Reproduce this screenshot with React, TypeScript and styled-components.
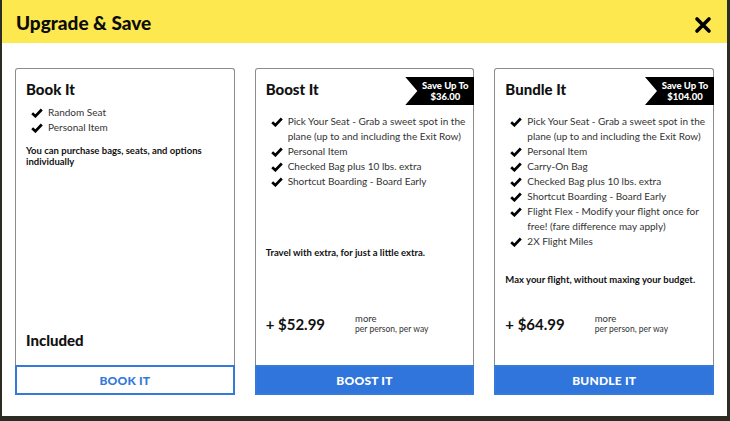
import React from 'react';
import styled, { createGlobalStyle } from 'styled-components';

interface Plan {
  title: string;
  features: string[];
  description: string;
  descGap: number;
  save?: string;
  price?: string;
  button: string;
  primary: boolean;
}

const PLANS: Plan[] = [
  {
    title: 'Book It',
    features: ['Random Seat', 'Personal Item'],
    description: 'You can purchase bags, seats, and options individually',
    descGap: 10,
    button: 'BOOK IT',
    primary: false,
  },
  {
    title: 'Boost It',
    features: [
      'Pick Your Seat - Grab a sweet spot in the plane (up to and including the Exit Row)',
      'Personal Item',
      'Checked Bag plus 10 lbs. extra',
      'Shortcut Boarding - Board Early',
    ],
    description: 'Travel with extra, for just a little extra.',
    descGap: 58,
    save: '$36.00',
    price: '+ $52.99',
    button: 'BOOST IT',
    primary: true,
  },
  {
    title: 'Bundle It',
    features: [
      'Pick Your Seat - Grab a sweet spot in the plane (up to and including the Exit Row)',
      'Personal Item',
      'Carry-On Bag',
      'Checked Bag plus 10 lbs. extra',
      'Shortcut Boarding - Board Early',
      'Flight Flex - Modify your flight once for free! (fare difference may apply)',
      '2X Flight Miles',
    ],
    description: 'Max your flight, without maxing your budget.',
    descGap: 25,
    save: '$104.00',
    price: '+ $64.99',
    button: 'BUNDLE IT',
    primary: true,
  },
];

const GlobalStyle = createGlobalStyle`
  html, body {
    margin: 0;
    padding: 0;
    background: #2c2c24;
    font-family: Lato, 'Liberation Sans', sans-serif;
  }
`;

const Check = () => (
  <CheckIcon viewBox="0 0 12 10" aria-hidden>
    <path d="M1.2 5.2 L4.4 8.2 L10.8 1.5" />
  </CheckIcon>
);

const App = () => (
  <>
    <GlobalStyle />
    <Modal>
      <Header>
        <Title>Upgrade &amp; Save</Title>
        <Close aria-label="Close">
          <svg viewBox="0 0 18 18" width="18" height="18">
            <path d="M3 3 L15 15 M15 3 L3 15" />
          </svg>
        </Close>
      </Header>
      <Cards>
        {PLANS.map((plan) => (
          <Card key={plan.title}>
            <CardBody>
              <CardHead>
                <CardTitle>{plan.title}</CardTitle>
                {plan.save && (
                  <Ribbon>
                    Save Up To
                    <br />
                    {plan.save}
                  </Ribbon>
                )}
              </CardHead>
              <FeatureList>
                {plan.features.map((f) => (
                  <li key={f}>
                    <Check />
                    <span>{f}</span>
                  </li>
                ))}
              </FeatureList>
              <Desc $gap={plan.descGap}>{plan.description}</Desc>
              {plan.price ? (
                <PriceRow>
                  <Price>{plan.price}</Price>
                  <PriceNote>
                    <span>more</span>
                    <small>per person, per way</small>
                  </PriceNote>
                </PriceRow>
              ) : (
                <Included>Included</Included>
              )}
            </CardBody>
            <ActionButton $primary={plan.primary}>{plan.button}</ActionButton>
          </Card>
        ))}
      </Cards>
    </Modal>
  </>
);

const Modal = styled.div`
  margin-left: 2px;
  width: 725px;
  height: 416px;
  background: #fff;
  display: flex;
  flex-direction: column;
`;

const Header = styled.header`
  height: 43px;
  background: #fde84f;
  display: flex;
  align-items: center;
  justify-content: space-between;
  padding: 0 14px;
  box-sizing: border-box;
`;

const Title = styled.h2`
  margin: 0;
  font-size: 19px;
  font-weight: 900;
  color: #0c0c0c;
  padding-top: 1px;
`;

const Close = styled.button`
  border: none;
  background: none;
  padding: 0;
  margin-right: 1px;
  margin-top: 6px;
  display: flex;
  cursor: pointer;

  svg path {
    stroke: #000;
    stroke-width: 3.6;
    stroke-linecap: round;
  }
`;

const Cards = styled.div`
  display: grid;
  grid-template-columns: repeat(3, 1fr);
  gap: 20px;
  padding: 25px 13px 0;
  height: 327px;
`;

const Card = styled.div`
  display: flex;
  flex-direction: column;
`;

const CardBody = styled.div`
  flex: 1;
  display: flex;
  flex-direction: column;
  border: 1px solid #8c8c8c;
  border-bottom: none;
  border-radius: 3px 3px 0 0;
  padding: 9px 4px 0 10px;
  color: #111;
`;

const CardHead = styled.div`
  display: flex;
  align-items: flex-start;
  justify-content: space-between;
  margin-bottom: 5px;
`;

const CardTitle = styled.h3`
  margin: 0;
  font-size: 15px;
  line-height: 22px;
  font-weight: 900;
`;

const Ribbon = styled.div`
  margin: -1px -5px 4px 0;
  width: 69px;
  height: 28px;
  box-sizing: border-box;
  padding: 3px 0 0 11px;
  background: #000;
  color: #fff;
  font-size: 9.5px;
  line-height: 11px;
  font-weight: 900;
  text-align: center;
  clip-path: polygon(0 0, 100% 0, 100% 100%, 0 100%, 12px 50%);
`;

const FeatureList = styled.ul`
  list-style: none;
  margin: 0;
  padding: 0 0 0 5px;

  li {
    display: flex;
    align-items: flex-start;
    font-size: 10px;
    line-height: 15px;
    color: #333;
  }

  span {
    flex: 1;
  }
`;

const CheckIcon = styled.svg`
  width: 12px;
  height: 10px;
  margin: 2.5px 5px 0 0;
  flex-shrink: 0;

  path {
    fill: none;
    stroke: #000;
    stroke-width: 2.7;
  }
`;

const Desc = styled.p<{ $gap: number }>`
  margin: ${({ $gap }) => $gap}px 6px 0 0;
  font-size: 9.5px;
  line-height: 11px;
  font-weight: 700;
  color: #111;
`;

const PriceRow = styled.div`
  margin-top: auto;
  margin-bottom: 30px;
  display: flex;
  align-items: center;
  gap: 30px;
`;

const Price = styled.div`
  font-size: 15px;
  font-weight: 700;
  color: #111;
`;

const PriceNote = styled.div`
  display: flex;
  flex-direction: column;
  font-size: 9.5px;
  line-height: 11px;
  color: #333;

  small {
    font-size: 8.5px;
  }
`;

const Included = styled.div`
  margin-top: auto;
  margin-bottom: 16px;
  font-size: 15px;
  font-weight: 900;
  color: #111;
`;

const ActionButton = styled.button<{ $primary: boolean }>`
  height: 30px;
  box-sizing: border-box;
  border: 2px solid #3579db;
  background: ${({ $primary }) => ($primary ? '#2f75dc' : '#fff')};
  color: ${({ $primary }) => ($primary ? '#fff' : '#3579db')};
  font-family: Lato, 'Liberation Sans', sans-serif;
  font-size: 12px;
  font-weight: 900;
  letter-spacing: 0.2px;
  cursor: pointer;
`;

export default App;
